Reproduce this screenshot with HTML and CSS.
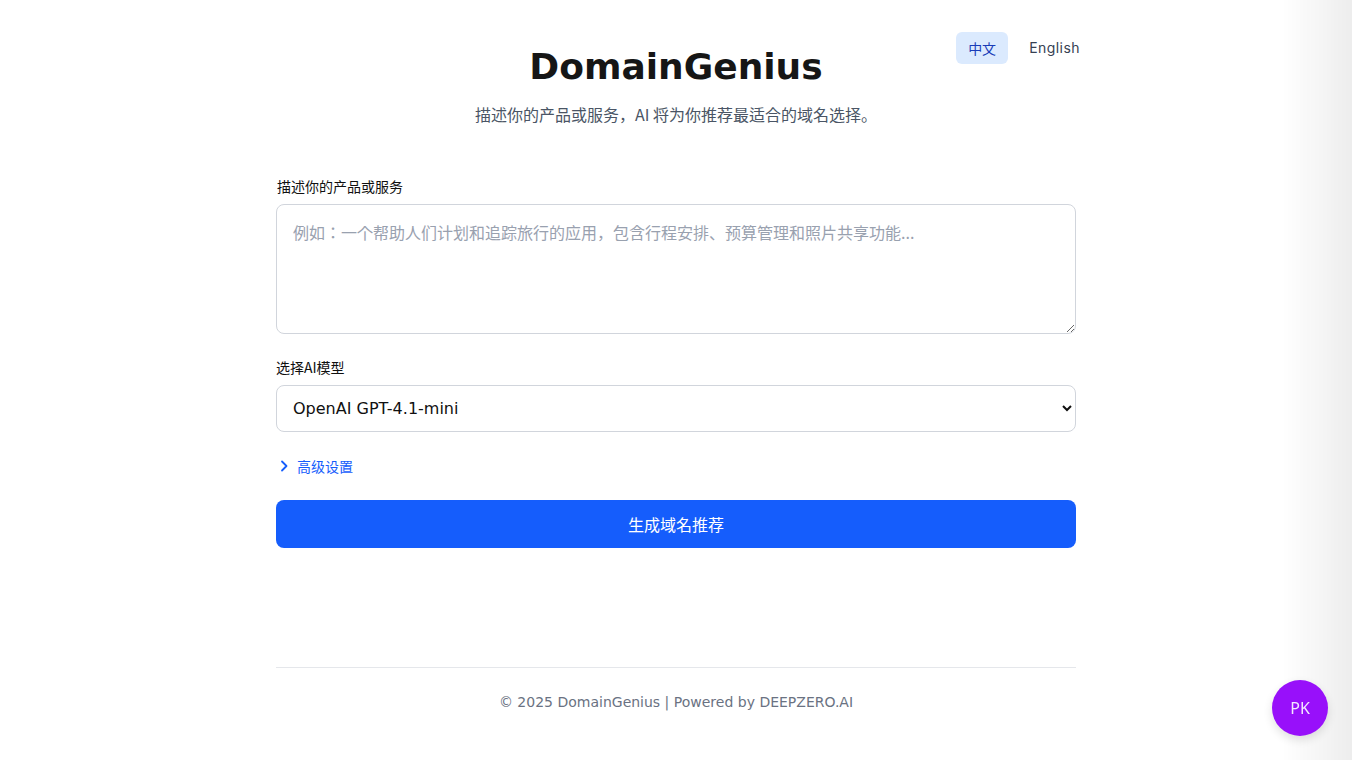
FILE: index.html
```html
<!DOCTYPE html>
<html>
<head>
<meta charset="utf-8">
<title>DomainGenius</title>
<link rel="stylesheet" href="styles.css">
</head>
<body>
<div class="page">
  <header class="header">
    <h1 class="title">DomainGenius</h1>
    <p class="subtitle">描述你的产品或服务，AI 将为你推荐最适合的域名选择。</p>
    <div class="lang">
      <button class="lang-btn active">中文</button>
      <button class="lang-btn">English</button>
    </div>
  </header>

  <form class="form">
    <label class="label" for="desc">描述你的产品或服务</label>
    <textarea id="desc" class="textarea" placeholder="例如：一个帮助人们计划和追踪旅行的应用，包含行程安排、预算管理和照片共享功能..."></textarea>

    <label class="label label-2" for="model">选择AI模型</label>
    <select id="model" class="select">
      <option>OpenAI GPT-4.1-mini</option>
    </select>

    <button type="button" class="advanced">
      <svg class="chev" width="10" height="12" viewBox="0 0 10 12"><path d="M3 1.5 L7.5 6 L3 10.5" fill="none" stroke="#155dfc" stroke-width="1.8" stroke-linecap="round" stroke-linejoin="round"/></svg>
      <span>高级设置</span>
    </button>

    <button type="button" class="submit">生成域名推荐</button>
  </form>

  <footer class="footer">
    <p>© 2025 DomainGenius | Powered by DEEPZERO.AI</p>
  </footer>
</div>
<div class="edge-shadow"></div>
<div class="avatar">PK</div>
</body>
</html>
```

FILE: styles.css
```css
* { box-sizing: border-box; }
html, body { margin: 0; padding: 0; background: #fff; }
body {
  font-family: "DejaVu Sans", "Noto Sans CJK JP", sans-serif;
  color: #101828;
  height: 760px;
  overflow: hidden;
}
.page {
  width: 832px;
  margin: 0 auto;
  padding-top: 47px;
}
.header {
  position: relative;
  text-align: center;
}
.title {
  margin: 0;
  font-family: "DejaVu Sans", sans-serif;
  font-weight: 700;
  font-size: 36px;
  line-height: 40px;
  color: #161616;
}
.subtitle {
  margin: 15px 0 0;
  font-family: "Noto Sans CJK JP", sans-serif;
  font-size: 16px;
  line-height: 24px;
  color: #4a5565;
}
.lang {
  position: absolute;
  top: -15px;
  right: 0;
  display: flex;
  gap: 9px;
}
.lang-btn {
  border: 0;
  background: transparent;
  font-family: "Inter", "Noto Sans CJK JP", sans-serif;
  font-size: 14px;
  line-height: 20px;
  letter-spacing: 0.45px;
  padding: 6px 12px;
  border-radius: 6px;
  color: #364153;
  cursor: pointer;
}
.lang-btn.active {
  font-family: "Noto Sans CJK JP", sans-serif;
  letter-spacing: 0;
  background: #dbeafe;
  color: #193cb8;
}
.form {
  width: 800px;
  margin: 50px auto 0;
  display: flex;
  flex-direction: column;
}
.label {
  font-family: "Noto Sans CJK JP", sans-serif;
  font-size: 14px;
  line-height: 20px;
  color: #101010;
  margin-bottom: 8px;
  padding-left: 1px;
}
.label-2 { margin-top: 23px; padding-left: 0; }
.textarea {
  width: 800px;
  height: 130px;
  border: 1px solid #d1d5dc;
  border-radius: 8px;
  padding: 15px 16px;
  font-family: "Noto Sans CJK JP", sans-serif;
  font-size: 16px;
  line-height: 24px;
  resize: vertical;
  color: #101828;
}
.textarea::placeholder { color: #99a1af; }
.select {
  width: 800px;
  height: 47px;
  border: 1px solid #d1d5dc;
  border-radius: 8px;
  padding: 0 12px;
  font-family: "DejaVu Sans", sans-serif;
  font-size: 16px;
  color: #101010;
  background: #fff;
}
.advanced {
  align-self: flex-start;
  margin-top: 24px;
  border: 0;
  background: transparent;
  padding: 0 0 0 3px;
  display: flex;
  align-items: center;
  gap: 8px;
  font-family: "Noto Sans CJK JP", sans-serif;
  font-size: 14px;
  line-height: 20px;
  color: #155dfc;
  cursor: pointer;
}
.chev { display: block; }
.submit {
  margin-top: 24px;
  height: 48px;
  border: 0;
  border-radius: 8px;
  background: #155dfc;
  color: #fff;
  font-family: "Noto Sans CJK JP", sans-serif;
  font-size: 16px;
  cursor: pointer;
}
.footer {
  width: 800px;
  margin: 119px auto 0;
  border-top: 1px solid #e5e7eb;
  text-align: center;
}
.footer p {
  margin: 24px 0 0;
  font-size: 14px;
  line-height: 20px;
  color: #6a7282;
}
.edge-shadow {
  position: fixed;
  top: 0;
  right: 0;
  width: 70px;
  height: 100%;
  background: linear-gradient(to right, rgba(0,0,0,0), rgba(0,0,0,0.07));
  pointer-events: none;
}
.avatar {
  position: fixed;
  right: 24px;
  bottom: 24px;
  width: 56px;
  height: 56px;
  border-radius: 50%;
  background: #9810fa;
  color: #f3e8ff;
  font-family: "Noto Sans", sans-serif;
  font-size: 16px;
  display: flex;
  align-items: center;
  justify-content: center;
  box-shadow: 0 4px 10px rgba(0,0,0,0.12);
}
```
